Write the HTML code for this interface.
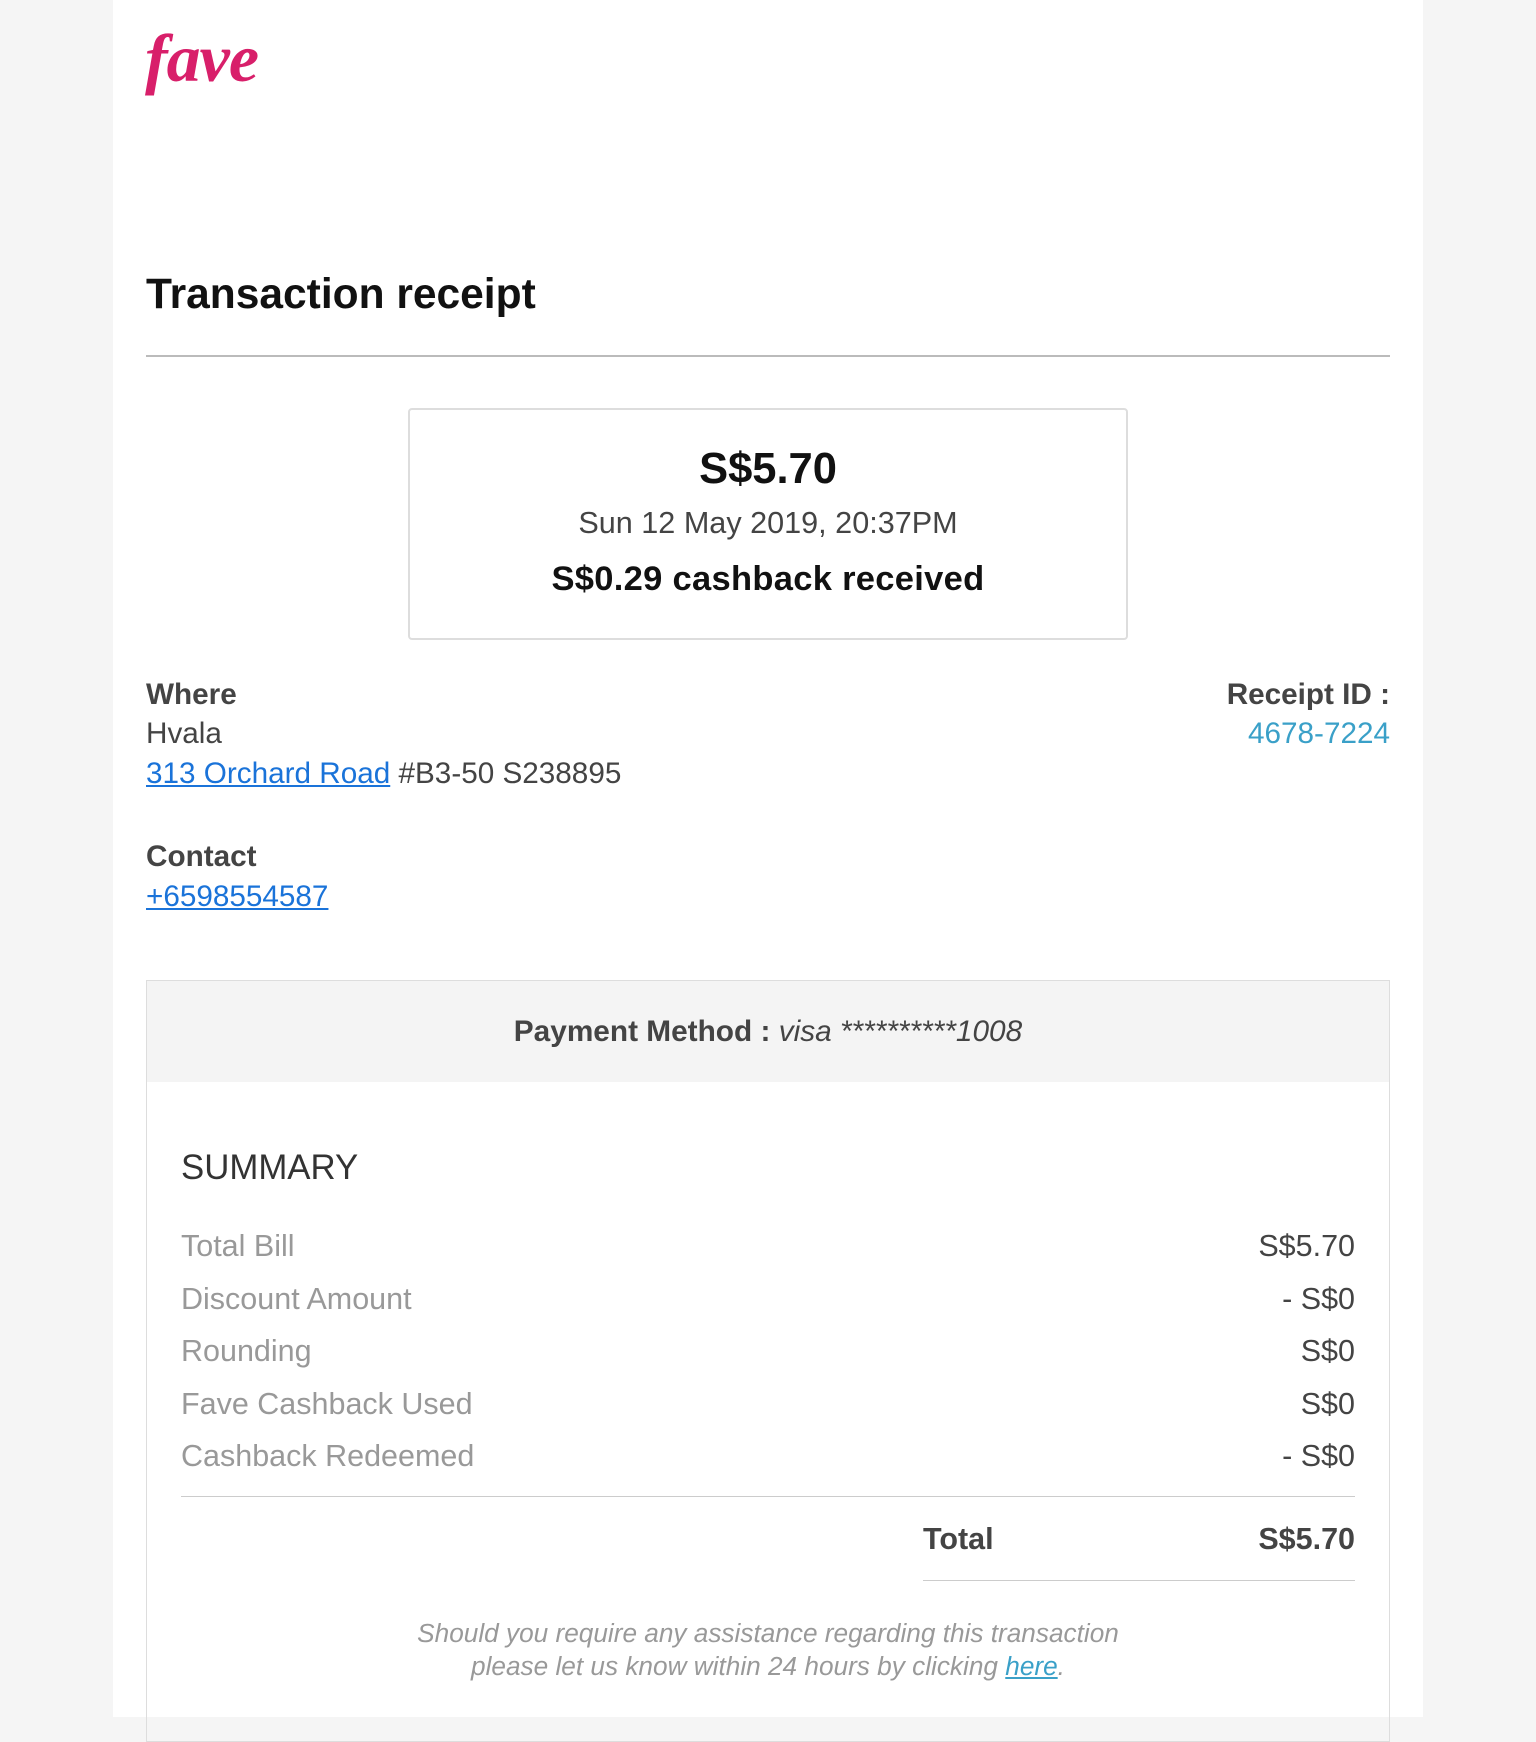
<!DOCTYPE html>
<html><head><meta charset="utf-8"><style>
html,body{margin:0;padding:0;}
body{width:1536px;height:1717px;background:#f5f5f5;position:relative;overflow:hidden;font-family:"Liberation Sans",Arial,sans-serif;}
.page{position:absolute;left:113px;top:0;width:1310px;height:1717px;background:#fff;}
.a{position:absolute;white-space:nowrap;line-height:1;}
.c{text-align:center;}
a{color:#1a73d9;text-decoration:underline;}
</style></head><body>
<div class="page"></div>
<div class="a" style="left:145px;top:24px;font-family:'Liberation Serif',serif;font-style:italic;font-weight:bold;font-size:68px;color:#d81f6a;letter-spacing:-1px;">fave</div>
<div class="a" style="left:146px;top:274px;font-size:42.5px;font-weight:bold;color:#111;">Transaction receipt</div>
<div class="a" style="left:146px;top:355px;width:1244px;height:2px;background:#bbb;"></div>
<div class="a" style="left:408px;top:408px;width:716px;height:228px;border:2px solid #ddd;border-radius:4px;"></div>
<div class="a c" style="left:408px;width:720px;top:448px;font-size:43.5px;font-weight:bold;color:#111;">S$5.70</div>
<div class="a c" style="left:408px;width:720px;top:508px;font-size:30.6px;color:#444;">Sun 12 May 2019, 20:37PM</div>
<div class="a c" style="left:408px;width:720px;top:562px;font-size:34.5px;font-weight:bold;color:#111;letter-spacing:0.3px;">S$0.29 cashback received</div>
<div class="a" style="left:146px;top:680px;font-size:29.7px;font-weight:bold;color:#444;">Where</div>
<div class="a" style="left:146px;top:719px;font-size:29.7px;color:#444;">Hvala</div>
<div class="a" style="left:146px;top:759px;font-size:29.7px;color:#444;"><a>313 Orchard Road</a> #B3-50 S238895</div>
<div class="a" style="right:146px;top:680px;font-size:29.7px;font-weight:bold;color:#444;">Receipt ID :</div>
<div class="a" style="right:146px;top:719px;font-size:29.7px;color:#3aa0c8;">4678-7224</div>
<div class="a" style="left:146px;top:842px;font-size:29.7px;font-weight:bold;color:#444;">Contact</div>
<div class="a" style="left:146px;top:882px;font-size:29.7px;color:#444;"><a>+6598554587</a></div>
<div class="a" style="left:146px;top:980px;width:1242px;height:760px;border:1px solid #ddd;"></div>
<div class="a" style="left:147px;top:981px;width:1242px;height:101px;background:#f4f4f4;"></div>
<div class="a c" style="left:146px;width:1244px;top:1017px;font-size:29.8px;color:#444;"><b>Payment Method :</b> <i>visa **********1008</i></div>
<div class="a" style="left:181px;top:1151px;font-size:34.8px;color:#333;">SUMMARY</div>
<div class="a" style="left:181px;top:1220px;font-size:30.5px;color:#999;line-height:52.5px;">Total Bill<br>Discount Amount<br>Rounding<br>Fave Cashback Used<br>Cashback Redeemed</div>
<div class="a" style="right:181px;top:1220px;font-size:30.5px;color:#444;line-height:52.5px;text-align:right;">S$5.70<br>- S$0<br>S$0<br>S$0<br>- S$0</div>
<div class="a" style="left:181px;top:1496px;width:1174px;height:1px;background:#ccc;"></div>
<div class="a" style="left:923px;top:1524px;font-size:30.5px;font-weight:bold;color:#444;">Total</div>
<div class="a" style="right:181px;top:1524px;font-size:30.5px;font-weight:bold;color:#444;">S$5.70</div>
<div class="a" style="left:923px;top:1580px;width:432px;height:1px;background:#ccc;"></div>
<div class="a c" style="left:146px;width:1244px;top:1617px;font-size:26.2px;font-style:italic;color:#999;line-height:33px;">Should you require any assistance regarding this transaction<br>please let us know within 24 hours by clicking <a style="color:#3aa0c8">here</a>.</div>
</body></html>
